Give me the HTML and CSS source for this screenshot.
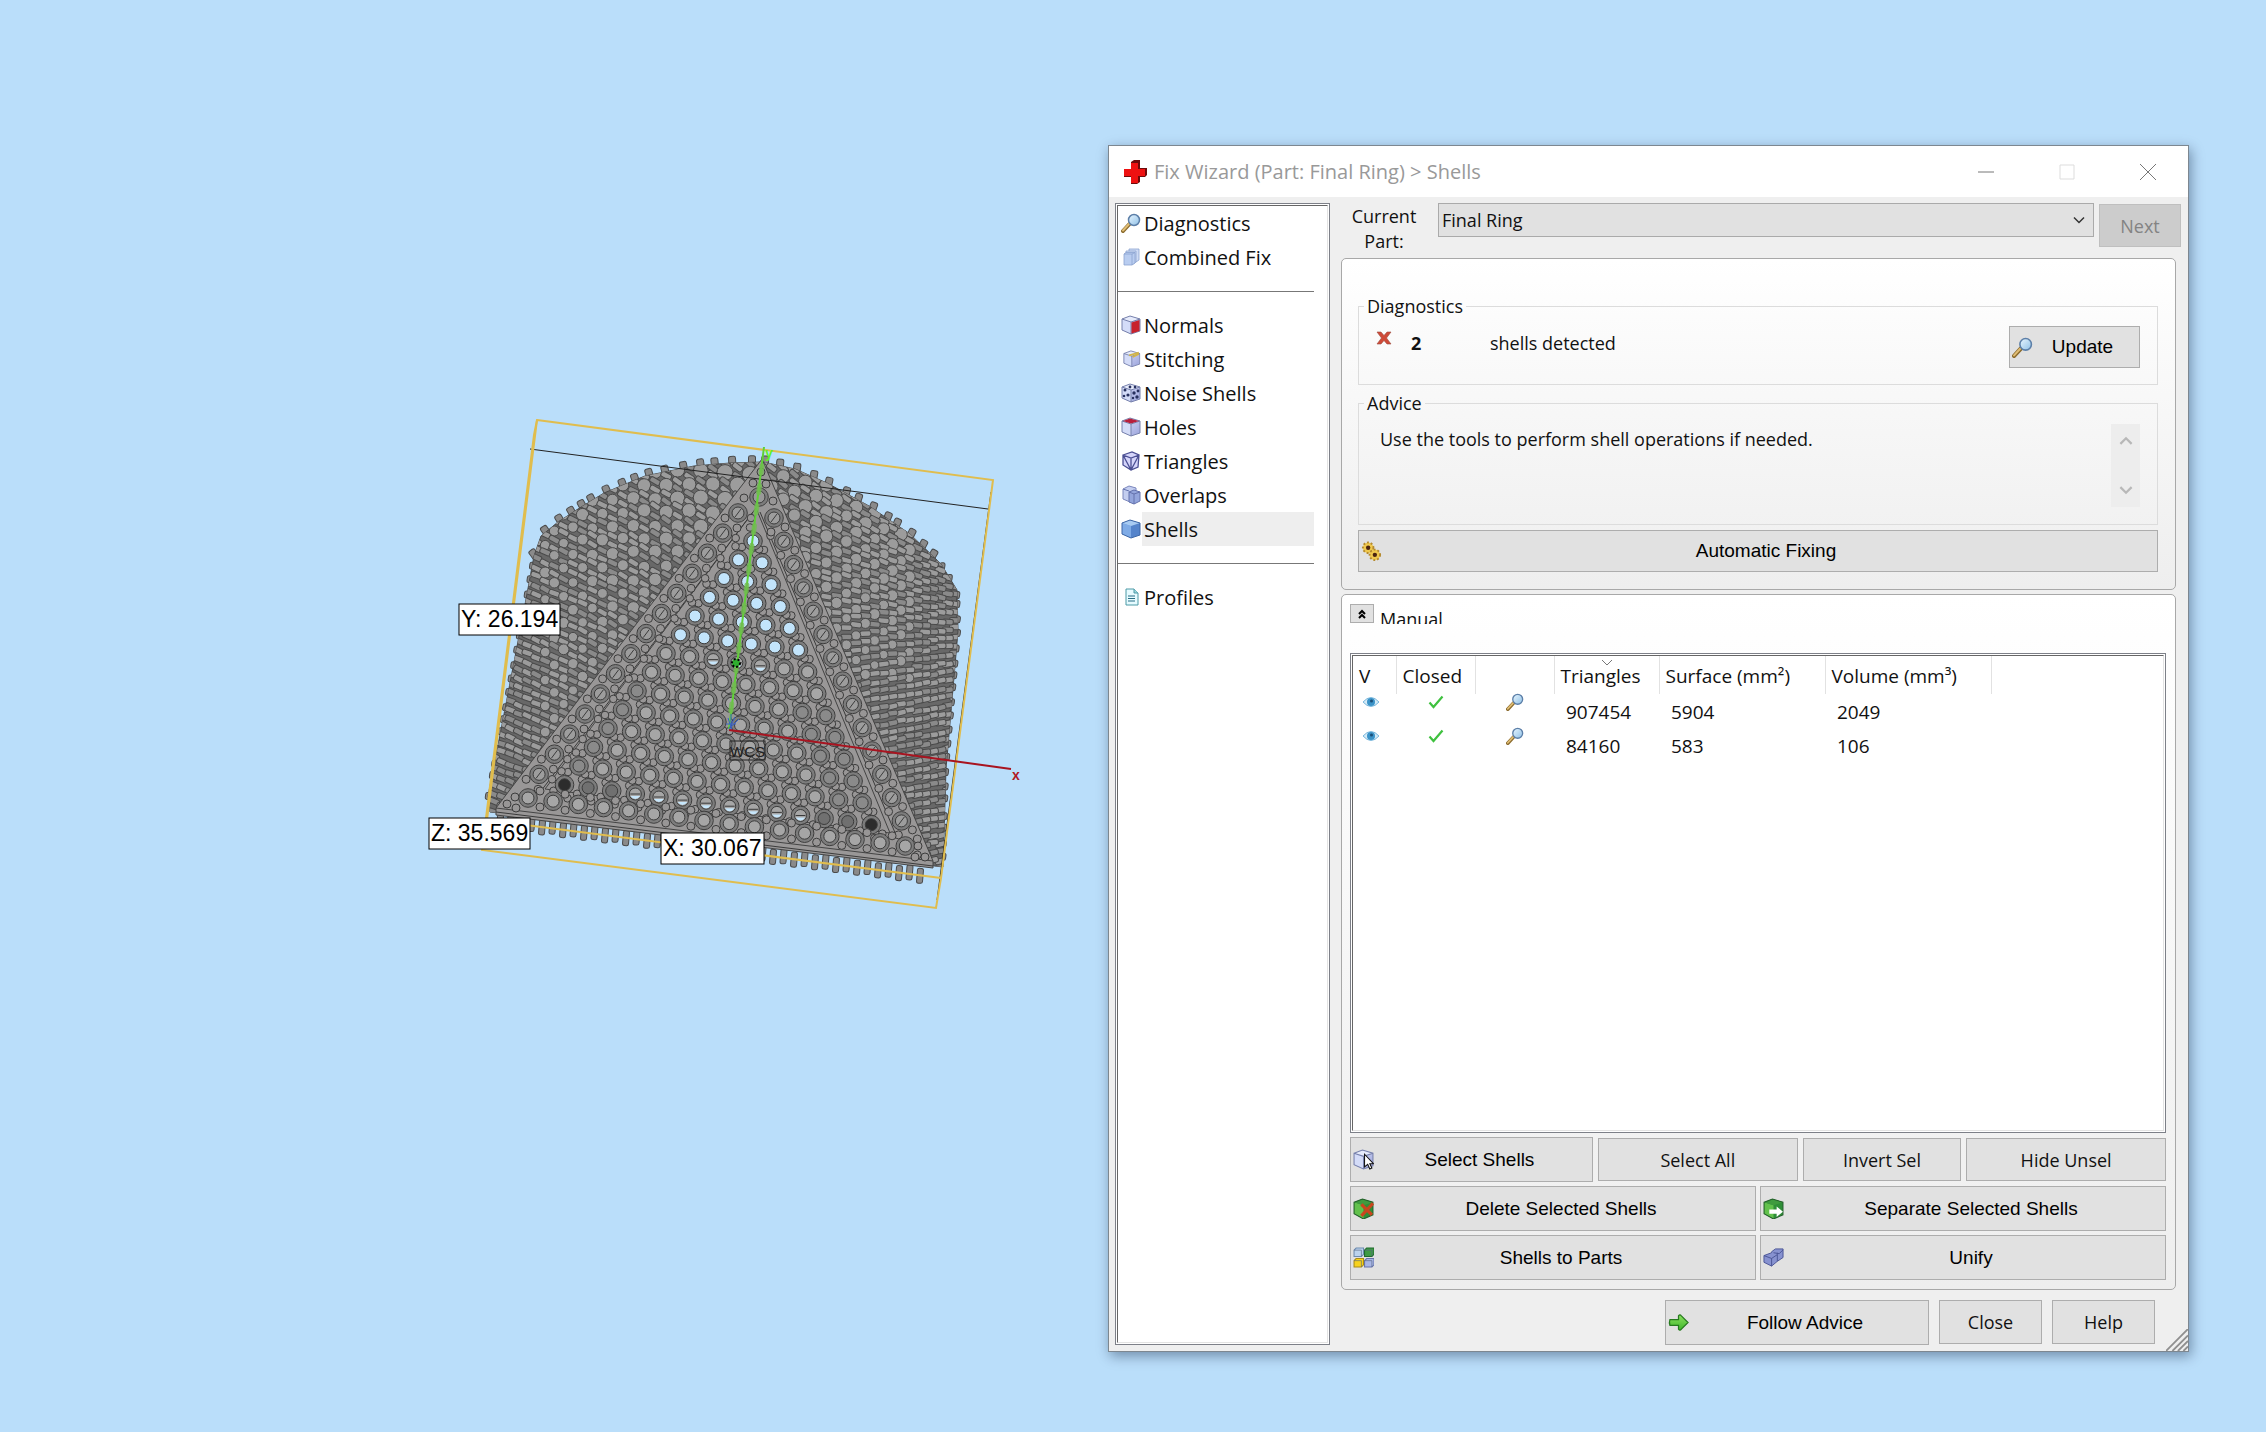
FILE: index.html
```html
<!DOCTYPE html>
<html lang="en">
<head>
<meta charset="utf-8">
<title>Fix Wizard (Part: Final Ring) &gt; Shells</title>
<link rel="stylesheet" href="styles.css">
</head>
<body>
<svg class="symbols" aria-hidden="true">
  <defs>
    <linearGradient id="g-lens" x1="0" y1="0" x2="1" y2="1"><stop offset="0" stop-color="#e8f6ff"/><stop offset="1" stop-color="#8fc0e6"/></linearGradient>
    <linearGradient id="g-face" x1="0" y1="0" x2="1" y2="1"><stop offset="0" stop-color="#dfe3fa"/><stop offset="1" stop-color="#9aa3dc"/></linearGradient>
    <linearGradient id="g-arrow" x1="0" y1="0" x2="0" y2="1"><stop offset="0" stop-color="#8be05f"/><stop offset="1" stop-color="#3fb82c"/></linearGradient>
  </defs>
  <symbol id="i-lens" viewBox="0 0 20 20"><path d="M2 18 8.500 11" stroke="#8a6a2c" stroke-width="4" stroke-linecap="round"/><path d="M2 17.500 8 11" stroke="#e0bd74" stroke-width="2" stroke-linecap="round"/><circle cx="13" cy="7" r="5.500" fill="url(#g-lens)" stroke="#5c7fa8" stroke-width="1.500"/></symbol>
  <symbol id="i-combined" viewBox="0 0 20 20"><g stroke="#8aa2cf" stroke-width=".8" fill="#cfdcf5"><path d="M8 2h10v11l-3 2H8z"/><path d="M5 4h10v11l-3 2H5z"/><path d="M3 7l2-1.500h9V16l-3 2H3z" fill="#b9cdf0"/><path d="M3 7h8v11M11 7l3-1.500" fill="none"/></g></symbol>
  <symbol id="i-cube" viewBox="0 0 20 20"><path d="M1 4 9 1l10 3v12l-9 3-9-4z" fill="url(#g-face)"/><path d="M1 4l9 3v12l-9-4z" fill="#d4dcf8"/><path d="M1 4 9 1l10 3-9 3z" fill="#e6ebfb"/><path d="M1 4 9 1l10 3v12l-9 3-9-4zM1 4l9 3 9-3M10 7v12" fill="none" stroke="#7781ac"/></symbol>
  <symbol id="i-normals" viewBox="0 0 20 20"><use href="#i-cube"/><path d="M10.500 7.500 18.500 5v11l-8 2.500z" fill="#c8222c"/></symbol>
  <symbol id="i-stitching" viewBox="0 0 20 20"><g transform="translate(2 1) scale(.88)"><use href="#i-cube" width="20" height="20"/><path d="M7 6 18 3M11 8l7-3.500" stroke="#d3b548" stroke-width="2"/></g></symbol>
  <symbol id="i-noise" viewBox="0 0 20 20"><use href="#i-cube"/><g fill="#28315f"><circle cx="4" cy="7" r="1.500"/><circle cx="7" cy="12" r="1.600"/><circle cx="3" cy="13" r="1.300"/><circle cx="9" cy="4" r="1.400"/><circle cx="14" cy="4" r="1.300"/><circle cx="13" cy="10" r="1.700"/><circle cx="17" cy="8" r="1.400"/><circle cx="16" cy="14" r="1.700"/><circle cx="12" cy="15" r="1.200"/></g></symbol>
  <symbol id="i-holes" viewBox="0 0 20 20"><use href="#i-cube"/><path d="M2 4 9 1.500 18 4l-8 2.500z" fill="#b81f3c"/></symbol>
  <symbol id="i-triangles" viewBox="0 0 20 20"><path d="M2 4 11 1l7 3-1 12-7 3-8-5z" fill="#d5d5fa"/><path d="M2 4 11 1l7 3-1 12-7 3-8-5zM2 4l8 3 8-3M10 7v12M2 4l8 15 8-15" fill="none" stroke="#4b4f93" stroke-width="1.300"/></symbol>
  <symbol id="i-overlaps" viewBox="0 0 20 20"><path d="M2 4 8 1l7 2v12l-6 2-7-3z" fill="#c4cef0" stroke="#7b87bd"/><path d="M8 7l5-2 6 2v9l-6 3-5-2z" fill="#93a5dc" stroke="#6472ad"/><path d="M8 7l5 2v10M13 9l6-2M2 4l6 2" fill="none" stroke="#6472ad"/></symbol>
  <symbol id="i-shells" viewBox="0 0 20 20"><path d="M1 4 9 1l10 3v12l-9 3-9-4z" fill="#5584cb"/><path d="M1 4l9 3v12l-9-4z" fill="#7fabe6"/><path d="M1 4 9 1l10 3-9 3z" fill="#a8cbf2"/><path d="M1 4 9 1l10 3v12l-9 3-9-4z" fill="none" stroke="#3e67a6"/></symbol>
  <symbol id="i-profiles" viewBox="0 0 20 20"><path d="M5 2h8l4 4v12H5z" fill="#e6fbff" stroke="#4d9aa6"/><path d="M13 2v4h4" fill="#9ed8e0" stroke="#4d9aa6"/><path d="M7 9h7M7 11.500h7M7 14h7" stroke="#286f86" stroke-width="1.200"/></symbol>
  <symbol id="i-eye" viewBox="0 0 18 14"><path d="M1 7Q9-2 17 7 9 16 1 7z" fill="#d3eaf7" stroke="#7db9dd"/><circle cx="9" cy="7" r="4" fill="#3a93c8"/><circle cx="9.500" cy="6" r="1.500" fill="#1b4f78"/></symbol>
  <symbol id="i-check" viewBox="0 0 16 14"><path d="M1.500 7.500 5.500 12 14.500 1.500" fill="none" stroke="#3fc13f" stroke-width="2.200"/></symbol>
  <symbol id="i-cross" viewBox="0 0 16 14"><path d="M1 1h4l3 3.500L11 1h4l-4.500 6 4.500 6h-4L8 9.500 5 13H1l4.500-6z" fill="#cf4a38" stroke="#9c4a3c" stroke-width=".6"/></symbol>
  <symbol id="i-gears" viewBox="0 0 22 22"><g fill="#f0c94e" stroke="#b58a2e" stroke-width="2" stroke-dasharray="2 2"><circle cx="7.500" cy="7" r="5.500"/><circle cx="14.500" cy="14.500" r="5.500"/></g><circle cx="7.500" cy="7" r="2.300" fill="#4b2410"/><circle cx="14.500" cy="14.500" r="2.300" fill="#4b2410"/></symbol>
  <symbol id="i-select" viewBox="0 0 20 20"><use href="#i-cube"/><path d="M11 5v12l3-2.500 2 4.500 2-1-2-4h3.500z" fill="#fff" stroke="#111"/></symbol>
  <symbol id="i-green" viewBox="0 0 20 20"><path d="M1 4 9 1l10 3v12l-9 4-9-5z" fill="#2f8f38"/><path d="M1 4l9 3v13l-9-5z" fill="#62c14c"/><path d="M1 4 9 1l10 3-9 3z" fill="#3f9b3f"/><path d="M1 4 9 1l10 3v12l-9 4-9-5z" fill="none" stroke="#24602b"/></symbol>
  <symbol id="i-delete" viewBox="0 0 20 20"><use href="#i-green"/><path d="M8 6l10 10M19 5 8 17" stroke="#c9461e" stroke-width="3"/></symbol>
  <symbol id="i-separate" viewBox="0 0 20 20"><use href="#i-green"/><path d="M6 11h7V8l6 5-6 5v-3H6z" fill="#fff"/></symbol>
  <symbol id="i-parts" viewBox="0 0 20 20"><path d="M1 3l2-2h7v6l-2 2H1z" fill="#bcd3ee" stroke="#6d8bb0"/><path d="M11 3l2-2h7v6l-2 2h-7z" fill="#3f9b45" stroke="#1e6a2c"/><path d="M1 13l2-2h7v6l-2 2H1z" fill="#f7d21d" stroke="#a98b16"/><path d="M11 13l2-2h7v6l-2 2h-7z" fill="#a9b6e6" stroke="#6673ab"/><path d="M1 3h7v6M11 3h7v6M1 13h7v6M11 13h7v6" fill="none" stroke="#55657f" stroke-width=".6"/></symbol>
  <symbol id="i-unify" viewBox="0 0 22 20"><path d="M1 8l8-3v-1l4-3h8v9l-6 4-6 5-8-4z" fill="#8792d0" stroke="#4b5596"/><path d="M1 8l8 3v8M9 11l6-4V5M11 5l6 1 4-4M15 7v7" fill="none" stroke="#4b5596"/></symbol>
  <symbol id="i-arrow" viewBox="0 0 22 20"><path d="M2 7h9V3q1.500-2 3 0l7 7-7 7q-1.500 2-3 0v-4H2q-1-3 0-6z" fill="url(#g-arrow)" stroke="#267a1f" stroke-width="1.300"/></symbol>
</svg>

<div class="desktop">
  <svg class="scene" id="scene" viewBox="0 145 1108 1207" role="img" aria-label="Part view: Final Ring">
    <g id="mesh"></g>
    <path class="edge" d="M530 449 988 509M991 492 937 900"/>
    <g class="bounds">
      <path d="M537 420 993 480 941 878 936 908 482 850 534 435z"/>
      <path d="M537 420 487 820 941 878"/>
    </g>
    <path class="axis-y" d="M764 447 729 729"/>
    <path class="axis-y-beads" d="M762 466 730 718"/>
    <circle class="origin-dot" cx="736" cy="663" r="4"/>
    <path class="axis-z" d="M728 718l4 12M731 714v16M735 717l-6 12M739 719l-8 8M726 724h10"/>
    <path class="axis-x" d="M729 730 1011 769"/>
    <text class="tag-y" x="765" y="458">y</text>
    <text class="tag-x" x="1012" y="780">x</text>
    <rect class="wcs-box" x="730" y="741" width="35" height="19"/>
    <text class="wcs" x="730" y="757">WCS</text>
    <g class="measure">
      <rect x="459" y="604" width="101" height="31"/><text x="461" y="627">Y: 26.194</text>
      <rect x="429" y="818" width="101" height="31"/><text x="431" y="841">Z: 35.569</text>
      <rect x="661" y="833" width="103" height="31"/><text x="663" y="856">X: 30.067</text>
    </g>
  </svg>

  <section class="dialog" role="dialog" aria-labelledby="dlg-title">
    <header class="titlebar">
      <svg class="logo" viewBox="0 0 26 26"><path d="M9 3l3-2h6v8h7v7l-2 2h-5v5l-3 2H9v-7H2V10h7z" fill="#6d0b0b"/><path d="M9 4h7v6h7v7h-7v7H9v-7H2v-7h7z" fill="#ee1111"/></svg>
      <h1 id="dlg-title">Fix Wizard (Part: Final Ring) &gt; Shells</h1>
      <div class="controls">
        <button type="button" aria-label="Minimize"><svg viewBox="0 0 18 18"><path d="M1 9h16"/></svg></button>
        <button type="button" aria-label="Maximize" disabled><svg viewBox="0 0 18 18"><path d="M2 2h14v14H2z"/></svg></button>
        <button type="button" aria-label="Close window"><svg viewBox="0 0 18 18"><path d="M1 1l16 16M17 1 1 17"/></svg></button>
      </div>
    </header>

    <div class="body">
      <nav class="side" aria-label="Steps">
        <div class="side-inner">
          <a href="#diagnostics"><svg><use href="#i-lens"/></svg><span>Diagnostics</span></a>
          <a href="#combined"><svg><use href="#i-combined"/></svg><span>Combined Fix</span></a>
          <hr>
          <a href="#normals"><svg><use href="#i-normals"/></svg><span>Normals</span></a>
          <a href="#stitching"><svg><use href="#i-stitching"/></svg><span>Stitching</span></a>
          <a href="#noise"><svg><use href="#i-noise"/></svg><span>Noise Shells</span></a>
          <a href="#holes"><svg><use href="#i-holes"/></svg><span>Holes</span></a>
          <a href="#triangles"><svg><use href="#i-triangles"/></svg><span>Triangles</span></a>
          <a href="#overlaps"><svg><use href="#i-overlaps"/></svg><span>Overlaps</span></a>
          <a href="#shells" class="current" aria-current="page"><svg><use href="#i-shells"/></svg><span>Shells</span></a>
          <hr>
          <a href="#profiles"><svg><use href="#i-profiles"/></svg><span>Profiles</span></a>
        </div>
      </nav>

      <main class="main">
        <div class="part-row">
          <label for="part">Current Part:</label>
          <div class="combo">
            <select id="part"><option>Final Ring</option></select>
            <svg viewBox="0 0 12 8"><path d="M1 1.500 6 6.500 11 1.500"/></svg>
          </div>
          <button type="button" class="btn next" disabled>Next</button>
        </div>

        <section class="panel overview">
          <fieldset>
            <legend>Diagnostics</legend>
            <div class="diag">
              <svg class="cross"><use href="#i-cross"/></svg>
              <b>2</b>
              <span>shells detected</span>
              <button type="button" class="btn tool update"><svg><use href="#i-lens"/></svg><span>Update</span></button>
            </div>
          </fieldset>
          <fieldset>
            <legend>Advice</legend>
            <div class="advice">
              <p>Use the tools to perform shell operations if needed.</p>
              <div class="scroll" aria-hidden="true">
                <svg viewBox="0 0 12 8"><path d="M1 7l5-5 5 5"/></svg>
                <svg viewBox="0 0 12 8"><path d="M1 1l5 5 5-5"/></svg>
              </div>
            </div>
          </fieldset>
          <button type="button" class="btn tool auto"><svg><use href="#i-gears"/></svg><span>Automatic Fixing</span></button>
        </section>

        <section class="panel manual">
          <div class="manual-head">
            <button type="button" class="collapse" aria-label="Collapse"><svg viewBox="0 0 10 12"><path d="M2 6l3-3 3 3M2 10l3-3 3 3"/></svg></button>
            <h2>Manual</h2>
          </div>
          <div class="list"><div class="list-inner">
            <table>
              <colgroup><col class="c-v"><col class="c-icon"><col class="c-icon"><col class="c-tri"><col class="c-num"><col class="c-num"><col></colgroup>
              <thead><tr><th>V</th><th>Closed</th><th></th><th><svg class="sort" viewBox="0 0 12 7"><path d="M1 1l5 5 5-5"/></svg>Triangles</th><th>Surface (mm²)</th><th>Volume (mm³)</th><td></td></tr></thead>
              <tbody>
                <tr><td><svg class="eye"><use href="#i-eye"/></svg></td><td><svg class="check"><use href="#i-check"/></svg></td><td><svg class="lens"><use href="#i-lens"/></svg></td><td>907454</td><td>5904</td><td>2049</td><td></td></tr>
                <tr><td><svg class="eye"><use href="#i-eye"/></svg></td><td><svg class="check"><use href="#i-check"/></svg></td><td><svg class="lens"><use href="#i-lens"/></svg></td><td>84160</td><td>583</td><td>106</td><td></td></tr>
              </tbody>
            </table>
          </div></div>
          <div class="row-select">
            <button type="button" class="btn tool"><svg><use href="#i-select"/></svg><span>Select Shells</span></button>
            <button type="button" class="btn plain">Select All</button>
            <button type="button" class="btn plain">Invert Sel</button>
            <button type="button" class="btn plain">Hide Unsel</button>
          </div>
          <div class="row-tools">
            <button type="button" class="btn tool"><svg><use href="#i-delete"/></svg><span>Delete Selected Shells</span></button>
            <button type="button" class="btn tool"><svg><use href="#i-separate"/></svg><span>Separate Selected Shells</span></button>
            <button type="button" class="btn tool"><svg><use href="#i-parts"/></svg><span>Shells to Parts</span></button>
            <button type="button" class="btn tool"><svg><use href="#i-unify"/></svg><span>Unify</span></button>
          </div>
        </section>

        <footer class="footer">
          <button type="button" class="btn tool follow"><svg><use href="#i-arrow"/></svg><span>Follow Advice</span></button>
          <button type="button" class="btn plain">Close</button>
          <button type="button" class="btn plain">Help</button>
        </footer>
      </main>
    </div>
    <svg class="grip" viewBox="0 0 24 24" aria-hidden="true"><path d="M0 24 24 0M7 24 24 7M13 24 24 13M19 24 24 19"/></svg>
  </section>
</div>
<script src="mesh.js"></script>
</body>
</html>
```

FILE: styles.css
```css
* { box-sizing: border-box; }

body {
  margin: 0;
  background: #badefa;
  color: #111;
  font: 18px/24px "Open Sans", "Noto Sans", sans-serif;
}

.symbols { position: absolute; width: 0; height: 0; }

.desktop {
  display: grid;
  grid-template-columns: 1108fr 1081fr 77fr;
  min-height: 100vh;
  padding: 145px 0 80px;
}

/* 3D view */
.scene { width: 100%; height: 100%; overflow: visible; }
.bounds path { fill: none; stroke: #e0bd4e; stroke-width: 2; }
.edge { fill: none; stroke: #222; stroke-width: 1; }
.axis-y { stroke: #5fd136; stroke-width: 2; }
.axis-y-beads { stroke: #71bd50; stroke-width: 5; stroke-dasharray: 7 13; stroke-linecap: round; opacity: .8; }
.axis-x { stroke: #a81420; stroke-width: 2; }
.axis-z { fill: none; stroke: #3a62c4; stroke-width: 1; }
.origin-dot { fill: #2fae2f; stroke: #000; stroke-width: 2; stroke-dasharray: 2 2; }
.tag-y, .tag-x { font: bold 14px "Liberation Sans", Arial, sans-serif; fill: #5ff02a; }
.tag-x { fill: #b01822; }
.wcs { font: 15px "Liberation Sans", Arial, sans-serif; fill: #222; }
.wcs-box { fill: none; stroke: #222; }
.measure rect { fill: #fff; stroke: #000; }
.measure text { font: 23px "Liberation Sans", Arial, sans-serif; fill: #000; }
.silhouette { fill: #686868; stroke: #484848; }
.pin { stroke: #4a4a4a; stroke-width: 1; fill: #8a8a8a; }
.pin-light { stroke: #4a4a4a; stroke-width: 1; fill: #9c9c9c; }
.face { fill: #999797; stroke: #444; stroke-width: 1; }
.ring { fill: #aaa; stroke: #7c7c7c; stroke-width: 3; }
.ring-line { fill: none; stroke: #3c3c3c; stroke-width: 1; }
.ball { fill: #989696; stroke: #3c3c3c; stroke-width: 1; }
.slash { stroke: #3b3b3b; stroke-width: 1; }

/* Dialog window */
.dialog {
  position: relative;
  display: flex;
  flex-direction: column;
  background: #efefef;
  border: 1px solid #7d8790;
  box-shadow: 2px 4px 12px rgba(0, 20, 50, .4);
}
.titlebar { display: flex; align-items: center; height: 51px; padding-left: 13px; background: #fff; }
.logo { width: 26px; height: 26px; }
.titlebar h1 { flex: 1; margin: 0 0 0 6px; font-size: 20px; font-weight: 400; color: #999; }
.controls { display: flex; height: 100%; }
.controls button { width: 81px; border: 0; padding: 0; background: none; }
.controls svg { width: 18px; height: 18px; fill: none; stroke: #777; display: block; margin: auto; }
.controls button:disabled svg { stroke: #ddd; }

.body { flex: 1; display: flex; gap: 11px; padding: 6px 7px 6px 6px; }

/* Step list */
.side { width: 215px; padding: 1px; border: 1px solid #7d8088; background: #fff; }
.side-inner { height: 100%; border: 1px solid; border-color: #666 #e3e3e3 #e3e3e3 #666; }
.side a { display: flex; align-items: center; height: 34px; margin-right: 13px; padding-left: 3px; color: #111; text-decoration: none; font-size: 20px; line-height: 32px; }
.side a svg { width: 20px; height: 20px; margin-right: 1px; overflow: visible; }
.side a span { flex: 1; padding: 2px 0 0 2px; }
.side .current span { background: #eee; }
.side hr { height: 1px; margin: 17px 13px 16px 0; border: 0; background: #777; }

/* Main column */
.main { flex: 1; min-width: 0; display: flex; flex-direction: column; }
.part-row { display: flex; align-items: flex-start; height: 55px; }
.part-row label { width: 86px; margin-right: 11px; padding: 1px 8px 0; line-height: 25px; text-align: center; }
.combo { position: relative; flex: 1; margin-right: 5px; }
.combo select { display: block; width: 100%; height: 34px; padding: 0 3px; border: 1px solid #aaa; border-radius: 0; appearance: none; background: #e1e1e1; color: #111; font: inherit; }
.combo svg { position: absolute; right: 9px; top: 13px; width: 12px; height: 8px; fill: none; stroke: #333; stroke-width: 1.500; pointer-events: none; }

.btn { position: relative; height: 45px; padding: 0; border: 1px solid #adadad; border-radius: 0; background: #e1e1e1; color: #111; font: inherit; text-align: center; }
.tool { display: flex; align-items: center; padding: 0 7px 0 2px; font: 19px/24px "Liberation Sans", Arial, sans-serif; color: #000; }
.tool span { flex: 1; padding-left: 22px; }
.tool svg { width: 21px; height: 21px; margin-right: -22px; }
.plain { height: 43px; }
.next { width: 82px; height: 43px; margin-top: 1px; border-color: #bfbfbf; background: #ccc; color: #838383; }

.panel { margin-right: 5px; border: 1px solid #a8a8a8; border-radius: 5px; background: linear-gradient(#fff, #eee); }
.overview { display: flex; flex-direction: column; padding: 35px 17px 17px 16px; }
fieldset { margin: 0 0 6px; padding: 0; border: 1px solid #dcdcdc; height: 91px; }
fieldset + fieldset { height: 134px; margin-bottom: 5px; }
legend { height: 24px; margin-left: 5px; padding: 0 3px; }
.diag { display: flex; align-items: flex-start; padding: 0 17px; }
.cross { width: 16px; height: 14px; margin-top: 13px; }
.diag b { width: 79px; margin: 13px 0 0 19px; }
.diag > span { flex: 1; margin-top: 13px; }
.update { width: 131px; height: 42px; margin-top: 8px; }
.advice { display: flex; padding: 9px 17px 0 21px; }
.advice p { flex: 1; margin: 3px 0 0; }
.scroll { display: flex; flex-direction: column; justify-content: space-between; align-items: center; width: 29px; height: 83px; padding: 12px 0; background: #ededed; }
.scroll svg { width: 14px; height: 9px; fill: none; stroke: #b8b8b8; stroke-width: 2; }
.auto { height: 42px; }

.manual { flex: 1; display: flex; flex-direction: column; margin-top: 4px; padding: 9px 9px 9px 8px; }
.manual-head { display: flex; align-items: flex-start; height: 49px; }
.collapse { width: 24px; height: 19px; padding: 0; border: 1px solid #adadad; background: #e1e1e1; }
.collapse svg { display: block; width: 10px; height: 12px; margin: auto; fill: none; stroke: #000; stroke-width: 2; }
.manual h2 { height: 20px; margin: 0 0 0 6px; padding-top: 3px; overflow: hidden; font-size: 18px; font-weight: 400; line-height: 24px; }
.list { flex: 1; margin-bottom: 4px; padding: 1px; border: 1px solid #7d8088; background: #fff; }
.list-inner { height: 100%; border: 1px solid; border-color: #666 #e3e3e3 #e3e3e3 #666; }
table { width: 100%; table-layout: fixed; border-collapse: collapse; font-size: 19px; }
.c-v { width: 43px; }
.c-icon { width: 79px; }
.c-tri { width: 105px; }
.c-num { width: 166px; }
th { position: relative; height: 38px; padding: 2px 6px 0; border-right: 1px solid #e2e2e2; font-weight: 400; text-align: left; white-space: nowrap; }
.sort { position: absolute; left: 46px; top: 3px; width: 12px; height: 7px; fill: none; stroke: #777; }
tbody td { height: 34px; padding: 4px 0 0 12px; vertical-align: top; line-height: 28px; }
tbody svg { display: block; }
tbody td:nth-child(-n+3) { padding: 0; }
.eye { width: 18px; height: 14px; margin: 1px auto 0 9px; }
.check { width: 16px; height: 14px; margin: 1px auto 0; }
.lens { width: 18px; height: 18px; margin: -1px auto 0; }
.row-select { display: grid; grid-template-columns: 242fr 199fr 158fr 199fr; gap: 5px; align-items: center; margin-bottom: 4px; }
.row-tools { display: grid; grid-template-columns: 1fr 1fr; gap: 4px; }

.footer { display: flex; justify-content: flex-end; gap: 10px; padding: 10px 26px 0 0; }
.footer .plain { width: 103px; height: 44px; }
.follow { width: 264px; }
.grip { position: absolute; right: 0; bottom: 0; width: 22px; height: 22px; stroke: #8f8f8f; stroke-width: 2; }
```

FILE: mesh.js
```js
// Draws the beaded ring: two textured flanks and the triangular front face.
(function () {
  const out = [];
  let seed = 7;
  const rnd = () => (seed = (seed * 16807) % 2147483647) / 2147483647;
  const f = n => n.toFixed(1);
  const lerp = (a, b, t) => a + (b - a) * t;

  const outline = [[490, 812], [488, 796], [500, 735], [510, 683], [524, 610], [534, 556], [541, 536],
    [558, 522], [578, 509], [604, 493], [645, 476], [694, 466], [730, 463], [763, 462], [795, 469], [827, 483],
    [869, 506], [910, 534], [941, 564], [957, 590], [958, 631], [952, 700], [946, 769], [943, 867]];

  function pin(x, y, len, w, deg, cls) {
    out.push(`<rect class="${cls}" x="${f(x - len / 2)}" y="${f(y - w / 2)}" width="${f(len)}" height="${f(w)}" rx="2" transform="rotate(${f(deg)} ${f(x)} ${f(y)})"/>`);
  }
  function ball(x, y, r, cls) {
    out.push(`<circle class="${cls}" cx="${f(x)}" cy="${f(y)}" r="${f(r)}"/>`);
  }
  function ring(x, y, fill, slash) {
    out.push(`<circle class="ring" cx="${f(x)}" cy="${f(y)}" r="7.500" style="fill:${fill}"/>`);
    out.push(`<circle class="ring-line" cx="${f(x)}" cy="${f(y)}" r="9.300"/><circle class="ring-line" cx="${f(x)}" cy="${f(y)}" r="6"/>`);
    if (slash) out.push(`<path class="slash" d="M${f(x - 3)} ${f(y + 4)}L${f(x + 3)} ${f(y - 4)}"/>`);
  }

  // pins sticking out along the crown and the sides
  for (let k = 1; k < outline.length - 1; k++) {
    const [x1, y1] = outline[k], [x2, y2] = outline[k + 1];
    const d = Math.hypot(x2 - x1, y2 - y1), n = Math.round(d / 15);
    for (let i = 0; i < n; i++) {
      const t = (i + rnd() * .4) / n, x = lerp(x1, x2, t), y = lerp(y1, y2, t);
      if (y < 560) pin(x, y - 1, 11, 7, 90 + (x - 750) / 6, 'pin');
      else pin(x, y, 5, 7, 8, 'pin');
    }
  }
  // pins under the base
  for (let x = 500; x < 930; x += 10.500) {
    pin(x, 818 + (x - 500) * 0.128 + (Math.round(x) % 3) * 2, 15, 6, 95, 'pin');
  }

  out.push(`<clipPath id="hull"><path d="M${outline.map(p => p.join(' ')).join('L')}z"/></clipPath>`);
  out.push(`<path class="silhouette" d="M${outline.map(p => p.join(' ')).join('L')}z"/>`);
  out.push('<g clip-path="url(#hull)">');
  // left flank: rows of pins run down towards the face, domes sit near the crown
  let col = 0;
  for (let x = 486; x < 766; x += 8 + 5 * (x - 486) / 270, col++) {
    const edge = 459 + (762 - x) * 1.330;
    const sag = (x - 486) * 0.4;
    for (let v = 330; v < 900; v += 9) {
      const y = v + sag + rnd() * 3, k = Math.round(v / 9);
      if (y < 455 || y > edge + 8) continue;
      const big = (x - 486) / 270 * Math.max(0, 1 - (y - 460) / 300);
      if (x > 545 && (k + col * 2) % 3 === 0) ball(x, y, 4 + 4 * big + rnd(), 'pin-light');
      else pin(x, y, 11, 5.500, 16 + (x - 486) / 16 + rnd() * 10, rnd() > .5 ? 'pin-light' : 'pin');
    }
  }
  // right flank: the rows fan out from steep at the crown to rising at the base
  col = 0;
  for (let x = 962; x > 762; x -= 7 + 5 * (962 - x) / 200, col++) {
    const edge = 459 + (x - 762) * 2.400;
    const sag = (962 - x) * 0.15;
    for (let v = 430; v < 880; v += 8.500) {
      const y = v + sag + rnd() * 3, k = Math.round(v / 8.500);
      if (y > edge + 8) continue;
      const t = Math.min(1, (y - 460) / 220);
      if (x < 915 && y < 680 && (k + col * 2) % 3 === 0) ball(x, y, 6.500 - 2.500 * t + rnd(), 'pin-light');
      else pin(x, y, 11, 5.500, lerp(40, -14, t) + rnd() * 8, rnd() > .5 ? 'pin-light' : 'pin');
    }
  }
  out.push('</g>');

  // front face with its inner frame
  out.push('<path class="face" d="M762 459 933 861 933 868 496 815 496 808z"/>');
  out.push('<path class="face" d="M496 808 933 861M756 508 545 789 890 833z"/>');
  out.push('<path class="slash" d="M753 512 541 791M760 512 896 835M496 812 933 866"/>');

  const P = (i, j) => [753 - 14.500 * i + 23.600 * j, 541 + 18.750 * i + 3.070 * j];
  for (let i = -1; i <= 13; i++) {
    for (let j = 0; j <= Math.max(i, 0); j++) {
      const [x, y] = P(i, j);
      ball(x + 3, y + 13.500, 3.800, 'ball');
      if (i >= 0) {
        ball(x - 11, y + 6, 3.800, 'ball');
        ball(x - 3, y - 13.500, 3.800, 'ball');
        if (j === i) ball(x + 11, y + 9, 3.800, 'ball');
      }
    }
  }
  for (let i = 0; i <= 13; i++) {
    for (let j = 0; j <= i; j++) {
      const [x, y] = P(i, j);
      let fill = '#a6a6a6';
      if (i < 6) fill = '#c2e4fb';
      else if (i === 13 && (j === 0 || j === 13)) fill = '#2c2c2c';
      else if (i === 13 && (j < 3 || j > 10)) fill = '#707070';
      else if (i > 7 && (j === 0 || j >= i - 1)) fill = '#8a8a8a';
      ring(x, y, fill, false);
      if ((i === 13 && j > 2 && j < 11) || (i === 6 && j > 1 && j < 5)) {
        out.push(`<path d="M${f(x - 5)} ${f(y + 2)}h10q-5 6-10 0z" fill="#c6e6fb"/><path class="slash" d="M${f(x - 5)} ${f(y)}h10"/>`);
      }
    }
  }

  // bead rows along the three sides of the frame
  for (let k = 0; k <= 13; k++) {
    const lx = 738 - 15.300 * k, ly = 513 + 20.100 * k;
    const rx = 774 + 9.800 * k, ry = 518 + 23.300 * k;
    ball(lx - 13, ly + 5, 4, 'ball'); ball(lx + 13, ly + 5, 3.800, 'ball');
    ball(lx - 1, ly + 15, 4, 'ball');
    ring(lx, ly, '#9d9d9d', true);
    ball(rx + 11, ry + 9, 4, 'ball'); ball(rx - 3, ry + 14, 4, 'ball');
    ring(rx, ry, '#9d9d9d', true);
  }
  for (let k = 0; k <= 15; k++) {
    const x = 528 + 25.150 * k, y = 798 + 3.200 * k;
    ball(x + 12, y - 7, 4, 'ball'); ball(x + 12, y + 9, 4, 'ball');
    ring(x, y, '#a6a6a6', false);
  }
  ring(759, 497, '#999', false);
  [[753, 483], [766, 484], [761, 472], [744, 498], [773, 501], [507, 804], [515, 797], [516, 808],
    [918, 846], [925, 857], [915, 857]].forEach(p => ball(p[0], p[1], 4, 'ball'));

  document.getElementById('mesh').innerHTML = out.join('');
})();
```
